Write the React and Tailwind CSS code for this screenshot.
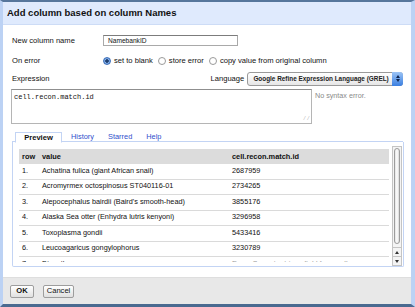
import React from "react";

const rows = [
  ["1.", "Achatina fulica (giant African snail)", "2687959"],
  ["2.", "Acromyrmex octospinosus ST040116-01", "2734265"],
  ["3.", "Alepocephalus bairdii (Baird's smooth-head)", "3855176"],
  ["4.", "Alaska Sea otter (Enhydra lutris kenyoni)", "3296958"],
  ["5.", "Toxoplasma gondii", "5433416"],
  ["6.", "Leucoagaricus gongylophorus", "3230789"],
];

const Radio = ({ on }) => (
  <span
    className={
      "inline-block w-[8px] h-[8px] rounded-full border mr-[3px] " +
      (on
        ? "border-[#3d6fb8] bg-[radial-gradient(circle,#1f3f70_0_1.5px,#8db6ec_2px,#4f86d4_4px)]"
        : "border-[#9a9a9a] bg-white")
    }
  />
);

const App = () => {
  return (
    <div
      className="w-[415px] h-[307px] flex flex-col border-t-2 border-t-[#56769c] border-b-[3px] border-b-[#4a6a90] border-l-[3px] border-l-[#bcd2f4] border-r-[4px] border-r-[#bcd2f4] text-[#111] overflow-hidden"
      style={{ fontFamily: '"Liberation Sans", Arial, sans-serif' }}
    >
      <div className="h-[23px] shrink-0 bg-[#dfeafd] border-b border-[#cddcf6] flex items-center pl-[4px] text-[9.5px] font-bold">
        Add column based on column Names
      </div>

      <div className="flex-1 bg-white flex flex-col px-[8px] text-[7.6px]">
        <div className="mt-[10px] h-[11px] flex items-center">
          <span className="w-[92px] pl-[1px]">New column name</span>
          <div className="w-[135px] h-[11px] border border-[#a9a9a9] border-t-[#7c7c7c] flex items-center pl-[4px] text-[6.6px]">
            NamebankID
          </div>
        </div>

        <div className="mt-[8px] h-[14px] flex items-center">
          <span className="w-[92px] pl-[1px]">On error</span>
          <Radio on />
          <span className="mr-[5px]">set to blank</span>
          <Radio />
          <span className="mr-[5px]">store error</span>
          <Radio />
          <span>copy value from original column</span>
        </div>

        <div className="mt-[3px] h-[15px] flex items-center">
          <span className="w-[200px] pl-[1px]">Expression</span>
          <span className="w-[37px]">Language</span>
          <div className="w-[156px] h-[14px] rounded-[3px] border border-[#9a9a9a] bg-[linear-gradient(#ffffff,#e6e6e6)] flex items-center pl-[5px] text-[6.4px] font-bold text-[#222] relative">
            Google Refine Expression Language (GREL)
            <span className="absolute right-[-1px] top-[-1px] w-[11px] h-[14px] rounded-r-[3px] bg-[linear-gradient(#9cc4f5,#3b7fe0)] flex flex-col items-center justify-center gap-[1px]">
              <span className="w-0 h-0 border-l-[2px] border-r-[2px] border-b-[3px] border-l-transparent border-r-transparent border-b-[#0d2550]" />
              <span className="w-0 h-0 border-l-[2px] border-r-[2px] border-t-[3px] border-l-transparent border-r-transparent border-t-[#0d2550]" />
            </span>
          </div>
        </div>

        <div className="mt-[3px] flex items-start">
          <div
            className="w-[301px] h-[35px] border border-[#b5b5b5] border-t-[#8f8f8f] pl-[2px] pt-[2px] text-[7px] relative"
            style={{ fontFamily: '"Liberation Mono", "Courier New", monospace' }}
          >
            cell.recon.match.id
            <span className="absolute right-[1px] bottom-[1px] text-[6px] text-[#999] leading-none">⁄⁄</span>
          </div>
          <span className="ml-[3px] mt-[2px] text-[#8a8a8a] text-[7.2px]">No syntax error.</span>
        </div>

        <div className="mt-[8px] ml-[1px] flex items-end h-[10px]">
          <div className="w-[3px] border-b border-[#c3d4f4] h-full" />
          <div className="w-[47px] h-[11px] bg-white border border-[#c3d4f4] border-b-white flex items-center justify-center font-bold text-[7.6px] -mb-px relative z-10">
            Preview
          </div>
          <div className="flex-1 h-full border-b border-[#c3d4f4] flex items-center text-[#2f4fcc] text-[7.4px]">
            <span className="ml-[9px]">History</span>
            <span className="ml-[14px]">Starred</span>
            <span className="ml-[14px]">Help</span>
          </div>
        </div>

        <div className="ml-[1px] w-[392px] h-[125px] border border-t-0 border-[#c3d4f4] rounded-b-[2px] flex pl-[6px] pt-[7px] pr-[1px] overflow-hidden">
          <div className="w-[370px] h-[113px] overflow-hidden">
            <div className="h-[15px] bg-[#dcdcdc] flex items-center font-bold text-[7.4px]">
              <span className="w-[23px] pl-[3px]">row</span>
              <span className="w-[190px]">value</span>
              <span>cell.recon.match.id</span>
            </div>
            {rows.map((r) => (
              <div key={r[0]} className="h-[15.5px] border-b border-[#dadada] flex items-center text-[7.3px]">
                <span className="w-[23px] pl-[3px]">{r[0]}</span>
                <span className="w-[190px]">{r[1]}</span>
                <span>{r[2]}</span>
              </div>
            ))}
            <div className="h-[15.5px] flex items-center text-[7.3px]">
              <span className="w-[23px] pl-[3px]">7.</span>
              <span className="w-[190px]">Dipsothorax</span>
              <span className="text-[#999]">Error: Cannot retrieve field from null</span>
            </div>
          </div>
          <div className="ml-[3px] mt-[-3px] w-[10px] h-[120px] border border-[#c4c4c4] bg-[#f4f4f4] flex flex-col">
            <div className="mx-[1px] mt-[1px] h-[96px] rounded-[4px] border border-[#9c9c9c] bg-[linear-gradient(90deg,#e2e2e2,#ffffff_50%,#d8d8d8)]" />
            <div className="flex-1" />
            <div className="h-[9px] border-t border-[#c4c4c4] flex items-center justify-center">
              <span className="w-0 h-0 border-l-[2px] border-r-[2px] border-b-[3px] border-l-transparent border-r-transparent border-b-[#333]" />
            </div>
            <div className="h-[9px] border-t border-[#c4c4c4] flex items-center justify-center">
              <span className="w-0 h-0 border-l-[2px] border-r-[2px] border-t-[3px] border-l-transparent border-r-transparent border-t-[#333]" />
            </div>
          </div>
        </div>
        <div className="flex-1" />
      </div>

      <div className="h-[27px] shrink-0 bg-[#e8e8e8] border-t border-[#dedede] flex items-center pl-[7px] gap-[9px] text-[7.6px]">
        <button className="w-[24px] h-[13px] rounded-[2px] border border-[#9d9d9d] bg-[linear-gradient(#ffffff,#e0e0e0)] flex items-center justify-center font-bold">
          OK
        </button>
        <button className="w-[31px] h-[13px] rounded-[2px] border border-[#9d9d9d] bg-[linear-gradient(#ffffff,#e0e0e0)] flex items-center justify-center">
          Cancel
        </button>
      </div>
    </div>
  );
};

export default App;
